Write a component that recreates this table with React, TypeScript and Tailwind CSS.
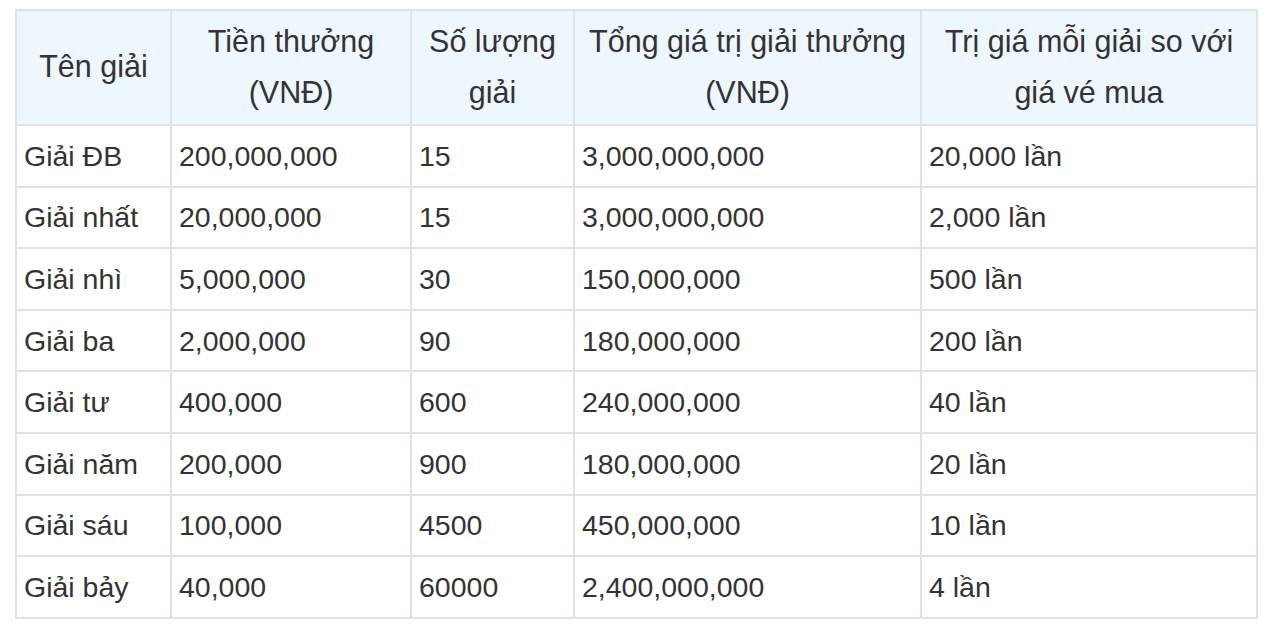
const rows = [
  ["Giải ĐB", "200,000,000", "15", "3,000,000,000", "20,000 lần"],
  ["Giải nhất", "20,000,000", "15", "3,000,000,000", "2,000 lần"],
  ["Giải nhì", "5,000,000", "30", "150,000,000", "500 lần"],
  ["Giải ba", "2,000,000", "90", "180,000,000", "200 lần"],
  ["Giải tư", "400,000", "600", "240,000,000", "40 lần"],
  ["Giải năm", "200,000", "900", "180,000,000", "20 lần"],
  ["Giải sáu", "100,000", "4500", "450,000,000", "10 lần"],
  ["Giải bảy", "40,000", "60000", "2,400,000,000", "4 lần"],
];

export default function App() {
  return (
    <div className="w-[1280px] h-[636px] bg-white pt-[9px] pl-[15px]">
      <table className="table-fixed border-collapse w-[1243px] text-[28.5px] leading-[46px] text-[#333] font-['Liberation_Sans',Arial,sans-serif]">
        <colgroup>
          <col className="w-[155px]" />
          <col className="w-[240px]" />
          <col className="w-[163px]" />
          <col className="w-[347px]" />
          <col className="w-[336px]" />
        </colgroup>
        <thead>
          <tr className="h-[115px] bg-[#eef6fe] text-[30.5px] leading-[51px]">
            <th className="border-2 border-[#dfe2e8] font-normal text-center px-[4px] pb-[2px]">Tên giải</th>
            <th className="border-2 border-[#dfe2e8] font-normal text-center px-[4px] pb-[2px]">
              Tiền thưởng
              <br />
              (VNĐ)
            </th>
            <th className="border-2 border-[#dfe2e8] font-normal text-center px-[4px] pb-[2px]">
              Số lượng
              <br />
              giải
            </th>
            <th className="border-2 border-[#dfe2e8] font-normal text-center px-[4px] pb-[2px]">
              Tổng giá trị giải thưởng
              <br />
              (VNĐ)
            </th>
            <th className="border-2 border-[#dfe2e8] font-normal text-center px-[4px] pb-[2px]">
              Trị giá mỗi giải so với
              <br />
              giá vé mua
            </th>
          </tr>
        </thead>
        <tbody>
          {rows.map((r) => (
            <tr key={r[0]} className="h-[61.6px]">
              {r.map((c, i) => (
                <td key={i} className="border-2 border-[#dfe2e8] px-[7px] align-middle">
                  {c}
                </td>
              ))}
            </tr>
          ))}
        </tbody>
      </table>
    </div>
  );
}
